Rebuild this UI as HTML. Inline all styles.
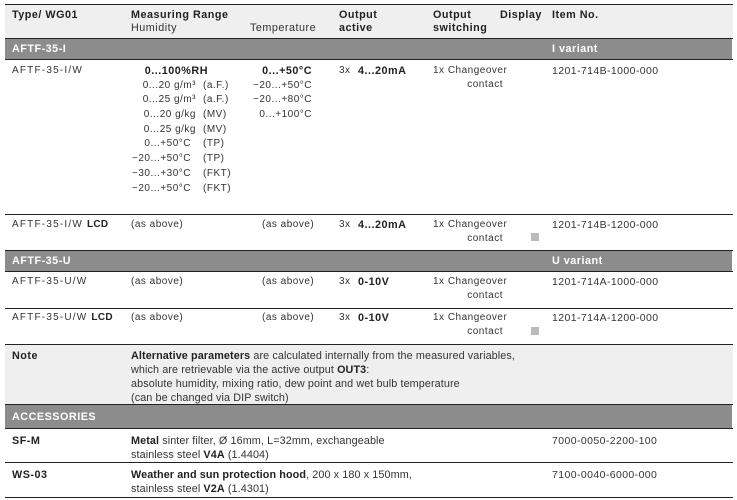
<!DOCTYPE html>
<html><head><meta charset="utf-8"><style>
body{margin:0;width:737px;height:500px;background:#fff;position:relative;overflow:hidden;font-family:"Liberation Sans",sans-serif;font-size:10px;color:#333;}
div{position:absolute;white-space:nowrap;}
.l{left:5px;width:728px;height:1px;background:#222;}
.bg{left:5px;width:728px;background:#efefef;}
.bar{left:5px;width:727px;background:#8c8c8c;}
.w{color:#fff;font-weight:bold;}
.t{line-height:12px;letter-spacing:0.5px;}
.b{font-weight:bold;color:#222;}
.r{text-align:right;}
.sq{width:8px;height:8px;background:#bbb;}
.n{font-size:10.8px;letter-spacing:0.1px!important;}
.h{font-size:10.8px;}
.i{letter-spacing:0.4px!important;font-size:10.5px;}
</style></head><body>
<div class="bg" style="top:5px;height:33px"></div>
<div class="bg" style="top:345px;height:59px"></div>
<div class="bar" style="top:39px;height:20px"></div>
<div class="bar" style="top:251px;height:20px"></div>
<div class="bar" style="top:405px;height:23px"></div>
<div class="l" style="top:4px"></div>
<div class="l" style="top:38px"></div>
<div class="l" style="top:59px"></div>
<div class="l" style="top:214px"></div>
<div class="l" style="top:250px"></div>
<div class="l" style="top:271px"></div>
<div class="l" style="top:308px"></div>
<div class="l" style="top:344px"></div>
<div class="l" style="top:404px"></div>
<div class="l" style="top:428px"></div>
<div class="l" style="top:462px"></div>
<div class="l" style="top:497px"></div>

<div class="t b h" style="left:12px;top:9px">Type/ WG01</div>
<div class="t b h" style="left:131px;top:9px">Measuring Range</div>
<div class="t h" style="left:131px;top:22px">Humidity</div>
<div class="t h" style="left:250px;top:22px">Temperature</div>
<div class="t b h" style="left:339px;top:9px">Output</div>
<div class="t b h" style="left:339px;top:22px">active</div>
<div class="t b h" style="left:433px;top:9px">Output</div>
<div class="t b h" style="left:433px;top:22px">switching</div>
<div class="t b h" style="left:500px;top:9px">Display</div>
<div class="t b h" style="left:552px;top:9px">Item No.</div>

<div class="t w h" style="left:12px;top:43px">AFTF-35-I</div>
<div class="t w h" style="left:552px;top:43px">I variant</div>

<div class="t" style="left:12px;top:65px;letter-spacing:1.2px">AFTF-35-I/W</div>
<div class="t b r h" style="left:110px;width:98px;top:65px">0...100%RH</div>
<div class="t r" style="left:100px;width:96px;top:80px">0...20 g/m³</div><div class="t" style="left:203px;top:80px">(a.F.)</div>
<div class="t r" style="left:100px;width:96px;top:94px">0...25 g/m³</div><div class="t" style="left:203px;top:94px">(a.F.)</div>
<div class="t r" style="left:100px;width:96px;top:109px">0...20 g/kg</div><div class="t" style="left:203px;top:109px">(MV)</div>
<div class="t r" style="left:100px;width:96px;top:124px">0...25 g/kg</div><div class="t" style="left:203px;top:124px">(MV)</div>
<div class="t r" style="left:100px;width:91px;top:138px">0...+50°C</div><div class="t" style="left:203px;top:138px">(TP)</div>
<div class="t r" style="left:100px;width:91px;top:153px">−20...+50°C</div><div class="t" style="left:203px;top:153px">(TP)</div>
<div class="t r" style="left:100px;width:91px;top:168px">−30...+30°C</div><div class="t" style="left:203px;top:168px">(FKT)</div>
<div class="t r" style="left:100px;width:91px;top:183px">−20...+50°C</div><div class="t" style="left:203px;top:183px">(FKT)</div>
<div class="t b r h" style="left:230px;width:82px;top:65px">0...+50°C</div>
<div class="t r" style="left:230px;width:82px;top:80px">−20...+50°C</div>
<div class="t r" style="left:230px;width:82px;top:94px">−20...+80°C</div>
<div class="t r" style="left:230px;width:82px;top:109px">0...+100°C</div>
<div class="t" style="left:339px;top:65px">3x</div><div class="t b h" style="left:358px;top:65px">4...20mA</div>
<div class="t" style="left:433px;top:65px">1x Changeover</div>
<div class="t r" style="left:433px;width:70px;top:79px">contact</div>
<div class="t i" style="left:552px;top:65px">1201-714B-1000-000</div>

<div class="t" style="left:12px;top:219px;letter-spacing:1.2px">AFTF-35-I/W <b style="color:#222;letter-spacing:0.3px">LCD</b></div>
<div class="t" style="left:131px;top:219px">(as above)</div>
<div class="t" style="left:262px;top:219px">(as above)</div>
<div class="t" style="left:339px;top:219px">3x</div><div class="t b h" style="left:358px;top:219px">4...20mA</div>
<div class="t" style="left:433px;top:219px">1x Changeover</div>
<div class="t r" style="left:433px;width:70px;top:233px">contact</div>
<div class="sq" style="left:531px;top:233px"></div>
<div class="t i" style="left:552px;top:219px">1201-714B-1200-000</div>

<div class="t w h" style="left:12px;top:255px">AFTF-35-U</div>
<div class="t w h" style="left:552px;top:255px">U variant</div>

<div class="t" style="left:12px;top:276px;letter-spacing:1.2px">AFTF-35-U/W</div>
<div class="t" style="left:131px;top:276px">(as above)</div>
<div class="t" style="left:262px;top:276px">(as above)</div>
<div class="t" style="left:339px;top:276px">3x</div><div class="t b h" style="left:358px;top:276px">0-10V</div>
<div class="t" style="left:433px;top:276px">1x Changeover</div>
<div class="t r" style="left:433px;width:70px;top:290px">contact</div>
<div class="t i" style="left:552px;top:276px">1201-714A-1000-000</div>

<div class="t" style="left:12px;top:312px;letter-spacing:1.2px">AFTF-35-U/W <b style="color:#222;letter-spacing:0.3px">LCD</b></div>
<div class="t" style="left:131px;top:312px">(as above)</div>
<div class="t" style="left:262px;top:312px">(as above)</div>
<div class="t" style="left:339px;top:312px">3x</div><div class="t b h" style="left:358px;top:312px">0-10V</div>
<div class="t" style="left:433px;top:312px">1x Changeover</div>
<div class="t r" style="left:433px;width:70px;top:326px">contact</div>
<div class="sq" style="left:531px;top:327px"></div>
<div class="t i" style="left:552px;top:312px">1201-714A-1200-000</div>

<div class="t b h" style="left:12px;top:350px">Note</div>
<div class="t n" style="left:131px;top:350px"><b style="color:#222">Alternative parameters</b> are calculated internally from the measured variables,</div>
<div class="t n" style="left:131px;top:364px">which are retrievable via the active output <b style="color:#222">OUT3</b>:</div>
<div class="t n" style="left:131px;top:378px">absolute humidity, mixing ratio, dew point and wet bulb temperature</div>
<div class="t n" style="left:131px;top:392px">(can be changed via DIP switch)</div>

<div class="t w h" style="left:12px;top:411px">ACCESSORIES</div>

<div class="t b h" style="left:12px;top:435px">SF-M</div>
<div class="t n" style="left:131px;top:435px"><b style="color:#222">Metal</b> sinter filter, Ø 16mm, L=32mm, exchangeable</div>
<div class="t n" style="left:131px;top:449px">stainless steel <b style="color:#222">V4A</b> (1.4404)</div>
<div class="t i" style="left:552px;top:435px">7000-0050-2200-100</div>

<div class="t b h" style="left:12px;top:469px">WS-03</div>
<div class="t n" style="left:131px;top:469px"><b style="color:#222">Weather and sun protection hood</b>, 200 x 180 x 150mm,</div>
<div class="t n" style="left:131px;top:483px">stainless steel <b style="color:#222">V2A</b> (1.4301)</div>
<div class="t i" style="left:552px;top:469px">7100-0040-6000-000</div>
</body></html>
